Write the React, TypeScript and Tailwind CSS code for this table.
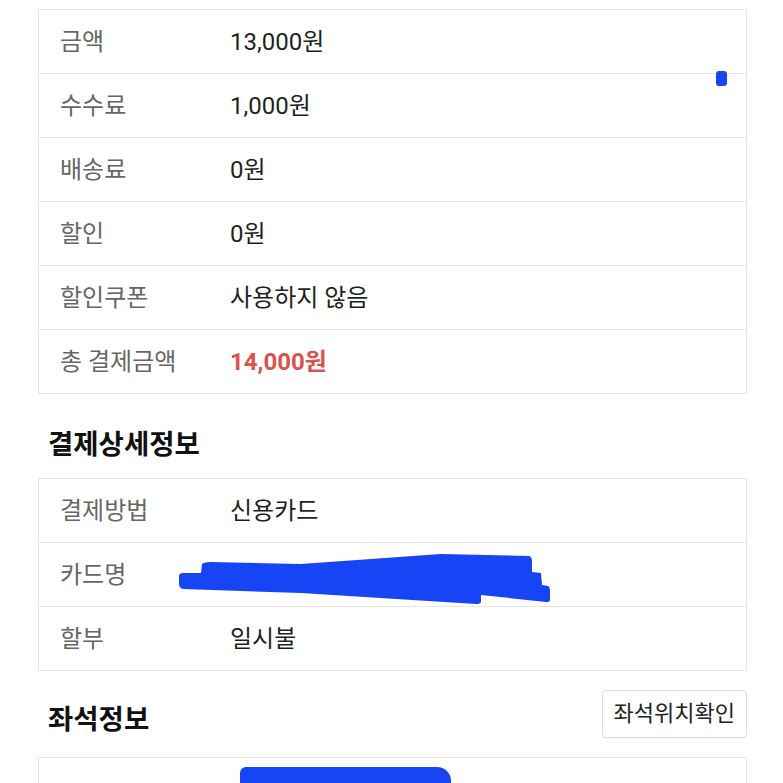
const font = { fontFamily: 'Roboto, "Noto Sans CJK KR", "Noto Sans", sans-serif' };

type Row = { label: string; value: React.ReactNode; redact?: boolean };

const priceRows: Row[] = [
  { label: '금액', value: '13,000원' },
  { label: '수수료', value: '1,000원' },
  { label: '배송료', value: '0원' },
  { label: '할인', value: '0원' },
  { label: '할인쿠폰', value: '사용하지 않음' },
  { label: '총 결제금액', value: <span className="font-bold text-[#d9534c]">14,000원</span> },
];

const payRows: Row[] = [
  { label: '결제방법', value: '신용카드' },
  { label: '카드명', value: '', redact: true },
  { label: '할부', value: '일시불' },
];

function CardRedaction() {
  return (
    <svg className="pointer-events-none absolute left-0 top-0" width="709" height="64" viewBox="0 0 709 64">
      <path
        fill="#1745f6"
        d="M140,33 Q140,30 144,30 L162,30 L163,21 Q165,19 172,19 L262,21 L402,11 L490,13 Q493,14 493,18 L493,29 L502,30 L503,42 L509,43 Q511,44 511,48 L511,57 Q511,59 507,59 L442,52 L442,59 Q441,61 437,61 L262,50 L144,46 Q140,45 140,41 Z"
      />
    </svg>
  );
}

function InfoTable({ rows }: { rows: Row[] }) {
  return (
    <div className="border-x border-t border-[#e6e6e6] bg-white">
      {rows.map((row) => (
        <div
          key={row.label}
          className="relative grid h-[64px] grid-cols-[191px_1fr] items-center border-b border-[#e6e6e6]"
        >
          <div className="pl-[21px] text-[24px] text-[#666666]">{row.label}</div>
          <div className="text-[24px] text-[#1f1f1f]">{row.value}</div>
          {row.redact && <CardRedaction />}
        </div>
      ))}
    </div>
  );
}

export default function App() {
  return (
    <div className="relative min-h-[783px] overflow-hidden bg-white pl-[38px] pr-[36px] pt-[9px]" style={font}>
      <InfoTable rows={priceRows} />

      <h2 className="pb-[19px] pl-[10px] pt-[37px] text-[27.5px] font-bold leading-[28px] text-[#111111]">결제상세정보</h2>

      <InfoTable rows={payRows} />

      <div className="flex h-[86px] items-start justify-between">
        <h2 className="mt-[35px] pl-[10px] text-[27.5px] font-bold leading-[28px] text-[#111111]">좌석정보</h2>
        <button className="mt-[19px] h-[48px] rounded-[4px] border border-[#dcdcdc] bg-white px-[11px] pb-[2px] text-[22px] text-[#222222] shadow-[0_1px_1px_rgba(0,0,0,0.04)]">
          좌석위치확인
        </button>
      </div>

      <div className="relative h-[64px] border border-[#e6e6e6] bg-white">
        <div className="absolute left-[201px] top-[9px] h-[40px] w-[211px] rounded-tl-[6px] rounded-tr-[14px] bg-[#1745f6]" />
      </div>

      <div className="absolute left-[716px] top-[71px] h-[15px] w-[11px] rounded-[3px] bg-[#1745f6]" />
    </div>
  );
}
